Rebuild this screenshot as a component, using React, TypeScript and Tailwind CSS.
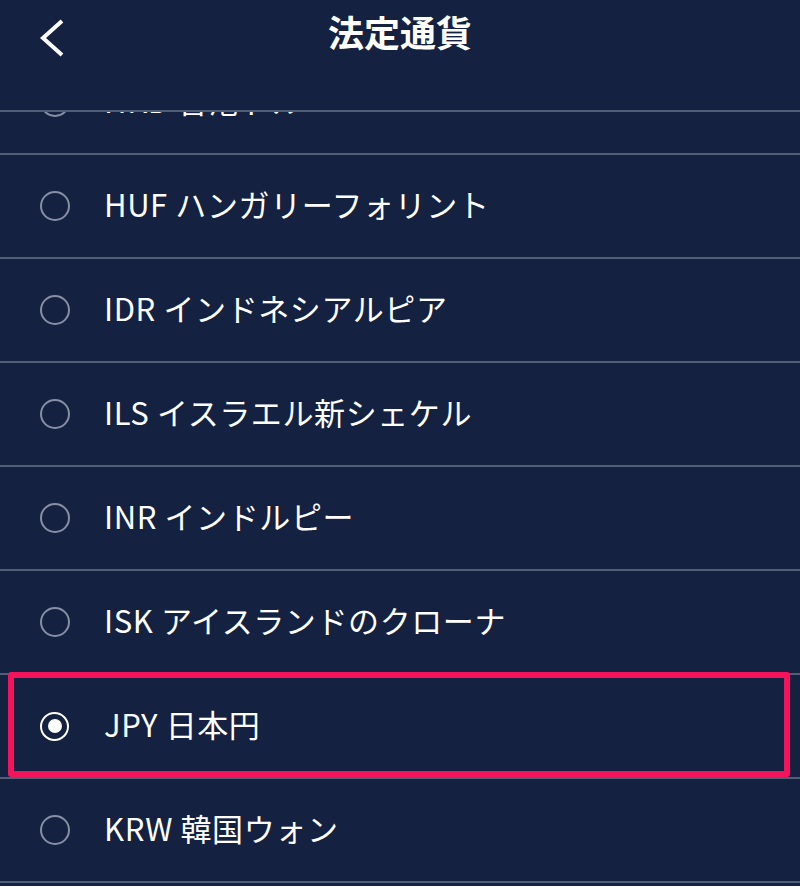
import React from "react";

const rows = [
  { code: "HKD 香港ドル", selected: false },
  { code: "HUF ハンガリーフォリント", selected: false },
  { code: "IDR インドネシアルピア", selected: false },
  { code: "ILS イスラエル新シェケル", selected: false },
  { code: "INR インドルピー", selected: false },
  { code: "ISK アイスランドのクローナ", selected: false },
  { code: "JPY 日本円", selected: true },
  { code: "KRW 韓国ウォン", selected: false },
];

function Radio({ selected }: { selected: boolean }) {
  if (selected) {
    return (
      <span className="flex h-[29px] w-[29px] items-center justify-center rounded-full border-2 border-white">
        <span className="h-[14px] w-[14px] rounded-full bg-white" />
      </span>
    );
  }
  return <span className="h-[30px] w-[30px] rounded-full border-2 border-[#868fa3]" />;
}

export default function App() {
  return (
    <div
      className="flex h-[886px] w-[800px] flex-col overflow-hidden bg-[#142141] text-white"
      style={{ fontFamily: '"Noto Sans CJK JP", "Noto Sans", sans-serif' }}
    >
      <header className="relative z-10 grid h-[112px] shrink-0 grid-cols-[1fr_auto_1fr] items-start border-b-2 border-[#525d78] bg-[#142141] pt-[8px]">
        <div className="flex pl-[38px] pt-[10px]">
          <svg width="28" height="40" viewBox="0 0 28 40" fill="none">
            <polyline
              points="24,3 5,20 24,37"
              stroke="white"
              strokeWidth="4"
              strokeLinecap="butt"
              strokeLinejoin="miter"
            />
          </svg>
        </div>
        <h1 className="text-[36px] font-bold leading-[46px] tracking-[0px]">法定通貨</h1>
        <div />
      </header>
      <div className="flex-1 overflow-hidden">
        <div className="-mt-[61px] flex flex-col">
          {rows.map((r) => (
            <div
              key={r.code}
              className="relative flex h-[104px] shrink-0 items-center border-b-2 border-[#525d78] pl-[40px]"
            >
              <div className="flex w-[64px] items-center">
                <Radio selected={r.selected} />
              </div>
              <span className="mb-[6px] text-[31px] leading-none tracking-[0.6px]">{r.code}</span>
              {r.selected && (
                <div className="pointer-events-none absolute -top-[3px] bottom-0 left-[8px] right-[10px] rounded-[3px] border-[6px] border-[#f5135b]" />
              )}
            </div>
          ))}
        </div>
      </div>
    </div>
  );
}
